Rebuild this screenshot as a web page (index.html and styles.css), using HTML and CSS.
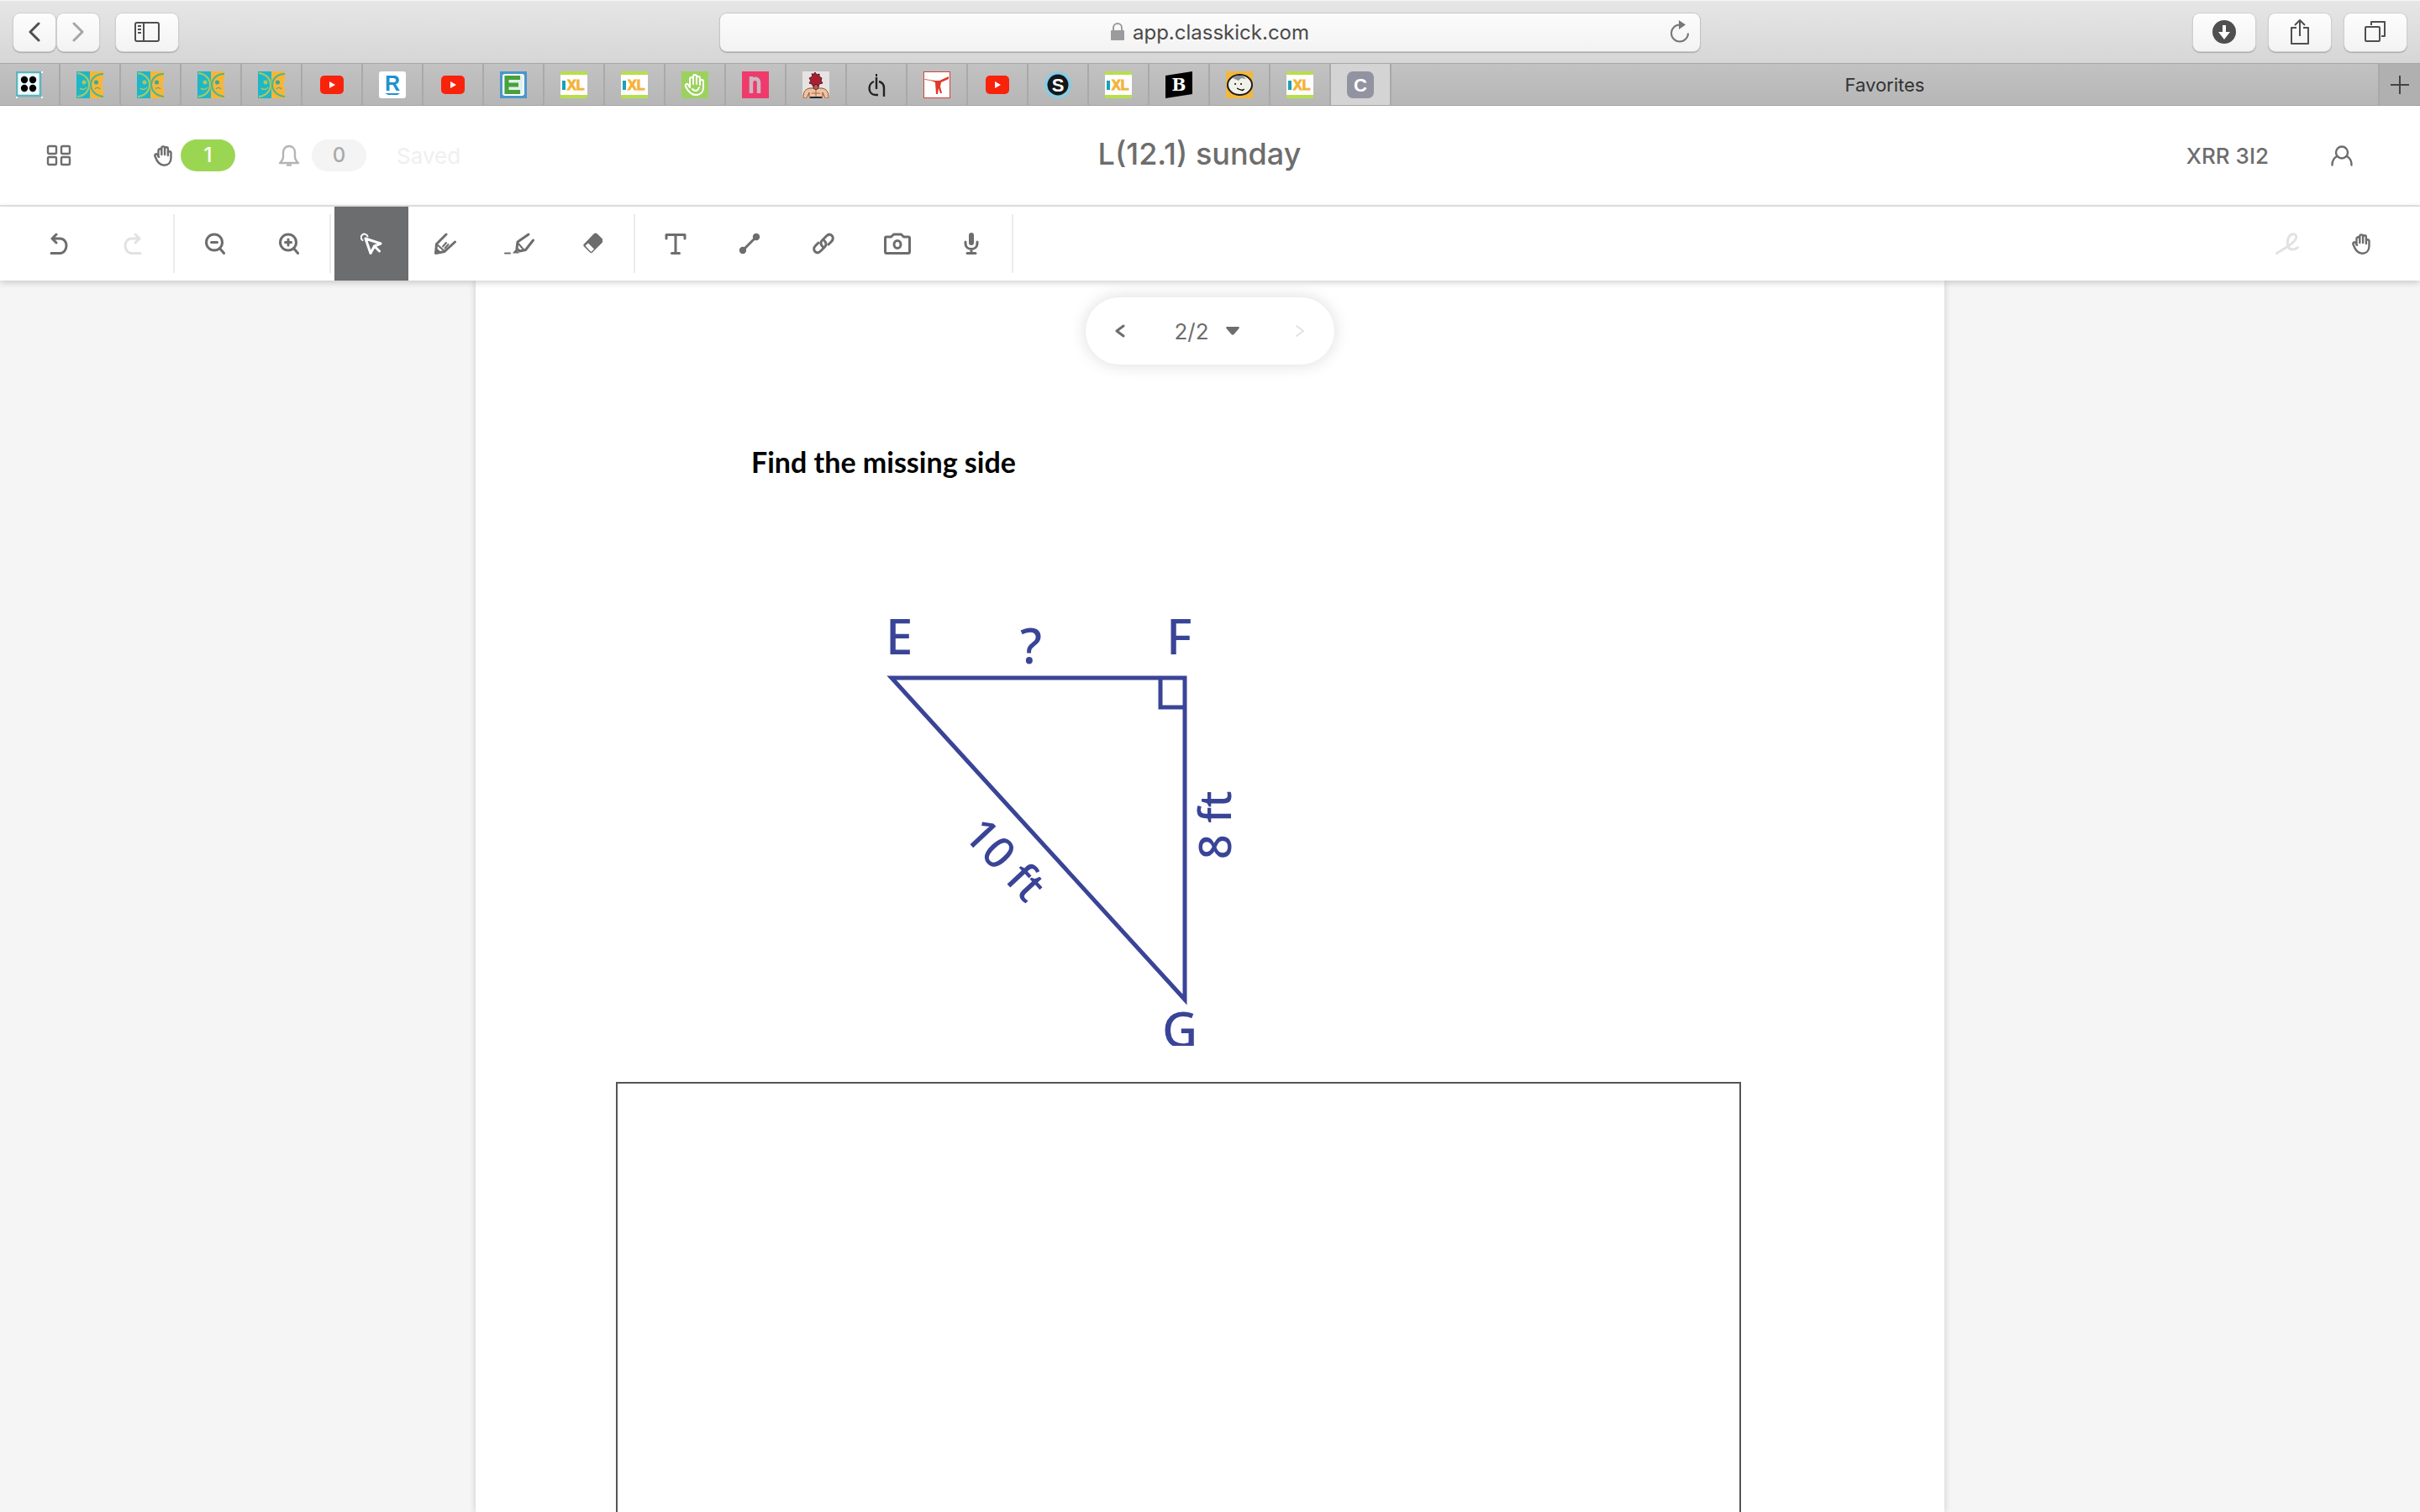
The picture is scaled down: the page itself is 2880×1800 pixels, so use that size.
FILE: index.html
```html
<!DOCTYPE html>
<html lang="en">
<head>
    <meta charset="UTF-8">
    <meta name="viewport" content="width=device-width, initial-scale=1.0">
    <title>L(12.1) sunday</title>
    <link rel="stylesheet" href="styles.css">
</head>
<body>
    <!-- Shared icons -->
    <svg class="sprite" aria-hidden="true">
        <symbol id="fav-faces" viewBox="0 0 32 32">
            <rect width="16" height="32" fill="#1fb6c6"/>
            <rect x="16" width="16" height="32" fill="#f6b638"/>
            <path d="M1 2C10 3 15 9 15 16S10 29 1 30" fill="none" stroke="#a9c766" stroke-width="2.200"/>
            <path d="M32 3c-9 0-15 6-15 13s6 13 15 14" fill="none" stroke="#4db68e" stroke-width="2.200"/>
            <circle cx="9" cy="13" r="2.500" fill="#a9c766"/>
            <circle cx="23.500" cy="13" r="2.500" fill="#3aa79a"/>
            <path d="M4 20c2 2 6 2 8-1" fill="none" stroke="#c6cc55" stroke-width="1.200"/>
            <path d="M22 21c1-2 5-2 6 0" fill="none" stroke="#3aa79a" stroke-width="1.200"/>
            <path d="M32 10l-2 7 2 3z" fill="#bdbdbd"/>
        </symbol>
        <symbol id="fav-youtube" viewBox="0 0 32 32">
            <rect x="2" y="5" width="28" height="22" rx="5" fill="#f9230b"/>
            <path d="M13 12v8l7-4z" fill="#fff"/>
        </symbol>
        <symbol id="hand" viewBox="0 0 22 25">
            <path d="M5.500 13.500V6.200a1.900 1.900 0 0 1 3.800 0V11M9.300 11V3.300a1.900 1.900 0 0 1 3.800 0V11M13.100 11V4.200a1.900 1.900 0 0 1 3.800 0V12M16.900 8.500a1.900 1.900 0 0 1 3.600 0V15c0 5.500-3.500 8.700-8.300 8.700C7 23.700 3.800 19.500 1.500 13c-.8-2.600 1.600-3.600 3-1.700l1.600 2.500" fill="none" stroke="currentColor" stroke-width="2.400" stroke-linecap="round" stroke-linejoin="round"/>
        </symbol>
    </svg>

    <!-- Browser toolbar -->
    <div class="browser-bar">
        <div class="browser-left">
            <div class="nav-buttons">
                <button class="chrome-btn nav" aria-label="Back">
                    <svg width="14" height="24" viewBox="0 0 14 24"><path d="M12 2 2 12l10 10" class="chrome-line thick"/></svg>
                </button>
                <button class="chrome-btn nav muted" aria-label="Forward">
                    <svg width="14" height="24" viewBox="0 0 14 24"><path d="m2 2 10 10L2 22" class="chrome-line thick"/></svg>
                </button>
            </div>
            <button class="chrome-btn wide" aria-label="Sidebar">
                <svg width="30" height="24" viewBox="0 0 30 24"><rect x="1" y="1" width="28" height="22" rx="2" class="chrome-line"/><path d="M11 1v22M4 5h4M4 9h4M4 13h4" class="chrome-line"/></svg>
            </button>
        </div>
        <div class="address">
            <svg width="16" height="22" viewBox="0 0 16 22"><rect y="9" width="16" height="12" rx="1" fill="#9c9c9c"/><path d="M3 10V6a5 5 0 0 1 10 0v4" fill="none" stroke="#9c9c9c" stroke-width="2"/></svg>
            <input type="text" value="app.classkick.com" aria-label="Address">
            <button class="reload" aria-label="Reload">
                <svg width="24" height="28" viewBox="0 0 24 28"><path d="M12 5.500A10 10 0 1 0 22 15.500" fill="none" stroke="#777" stroke-width="2"/><path d="M11 0v11l8-5.500z" fill="#777"/></svg>
            </button>
        </div>
        <div class="browser-right">
            <button class="chrome-btn wide" aria-label="Downloads">
                <svg width="28" height="28" viewBox="0 0 28 28"><circle cx="14" cy="14" r="14" fill="#4f4f4f"/><path d="M12 6h4v8h5l-7 9-7-9h5z" fill="#fff"/></svg>
            </button>
            <button class="chrome-btn wide" aria-label="Share">
                <svg width="22" height="32" viewBox="0 0 22 32"><path d="M7 11H1v19h20V11h-6M11 21V2M5 8l6-6 6 6" class="chrome-line"/></svg>
            </button>
            <button class="chrome-btn wide" aria-label="Show tabs">
                <svg width="26" height="26" viewBox="0 0 26 26"><rect x="1" y="7" width="17" height="17" rx="1" class="chrome-line"/><path d="M8 5V1h16v17h-4" class="chrome-line"/></svg>
            </button>
        </div>
    </div>

    <!-- Tabs -->
    <nav class="tabs">
        <a href="#" class="tab" aria-label="Dots"><svg class="favicon" viewBox="0 0 32 32"><rect x="1" y="1" width="28" height="28" fill="#eef8fa" stroke="#5db5bf" stroke-width="2.500"/><circle cx="10" cy="10" r="4.200"/><circle cx="20" cy="10" r="4.200"/><circle cx="10" cy="20" r="4.200"/><circle cx="20" cy="20" r="4.200"/><path d="M30 0h2v2h-2zM0 30h2v2H0zM30 30h2v2h-2z" fill="#fff"/></svg></a>
        <a href="#" class="tab" aria-label="Faces"><svg class="favicon"><use href="#fav-faces"/></svg></a>
        <a href="#" class="tab" aria-label="Faces"><svg class="favicon"><use href="#fav-faces"/></svg></a>
        <a href="#" class="tab" aria-label="Faces"><svg class="favicon"><use href="#fav-faces"/></svg></a>
        <a href="#" class="tab" aria-label="Faces"><svg class="favicon"><use href="#fav-faces"/></svg></a>
        <a href="#" class="tab" aria-label="Video"><svg class="favicon"><use href="#fav-youtube"/></svg></a>
        <a href="#" class="tab" aria-label="R"><svg class="favicon" viewBox="0 0 32 32"><rect width="32" height="32" rx="3" fill="#fff"/><text x="7" y="23" class="r-text">R</text><path d="M7 26h18l-3 2H11z" fill="#2191cf"/></svg></a>
        <a href="#" class="tab" aria-label="Video"><svg class="favicon"><use href="#fav-youtube"/></svg></a>
        <a href="#" class="tab" aria-label="E"><svg class="favicon" viewBox="0 0 32 32"><rect width="32" height="32" fill="#4a97cb"/><rect x="4" y="4" width="24" height="24" rx="2" fill="#dff0ea" stroke="#fff" stroke-width="2"/><path d="M24 7.500H8v17h16M8 16h14" fill="none" stroke="#49a13b" stroke-width="5"/></svg></a>
        <a href="#" class="tab" aria-label="IXL"><svg class="favicon" viewBox="0 0 32 32"><rect width="32" height="32" fill="#fff"/><path d="M0 0h32v4H0zM0 28h32v4H0z" fill="#b7de4b"/><rect x="2" y="11" width="4" height="11" fill="#1c9fb8"/><text x="8" y="22" class="ixl-text">XL</text></svg></a>
        <a href="#" class="tab" aria-label="IXL"><svg class="favicon" viewBox="0 0 32 32"><rect width="32" height="32" fill="#fff"/><path d="M0 0h32v4H0zM0 28h32v4H0z" fill="#b7de4b"/><rect x="2" y="11" width="4" height="11" fill="#1c9fb8"/><text x="8" y="22" class="ixl-text">XL</text></svg></a>
        <a href="#" class="tab" aria-label="Hand"><svg class="favicon" viewBox="0 0 32 32"><rect width="32" height="32" fill="#9bd25e"/><path d="M10 18V9a2 2 0 0 1 4 0v6-9a2 2 0 0 1 4 0v9-7a2 2 0 0 1 4 0v8-4a2 2 0 0 1 4 0v7c0 6-4 9-9 9-6 0-9-4-12-10-1-3 2-4 3-2l2 3M13 21c3 3 6 3 8-2" fill="none" stroke="#fff" stroke-width="2" stroke-linejoin="round" stroke-linecap="round"/></svg></a>
        <a href="#" class="tab" aria-label="n"><svg class="favicon" viewBox="0 0 32 32"><rect width="32" height="32" fill="#ef3a6c"/><path d="M11 26V6M11 13c0-5 9-6 9 0v13" fill="none" stroke="#c9b9bf" stroke-width="4.500"/></svg></a>
        <a href="#" class="tab" aria-label="Fighter"><svg class="favicon" viewBox="0 0 32 32"><rect width="32" height="32" fill="#e6e4e2"/><path d="M1 32c0-8 2-11 8-12h14c6 1 8 4 8 12h-4l-3-7v7H8v-7l-3 7z" fill="#efc3a0" stroke="#8d5038"/><path d="M13 13h6v7l-3 2-3-2z" fill="#b5614a" stroke="#5b2622"/><path d="M15 1l2 3 3-1 0 3 3 2-1 3 2 3-4 1-1 3-3-3-3 3-2-3-3-1 2-3-2-3 4-2-1-3 3 0z" fill="#a81f33" stroke="#641725"/><path d="M16 22v8M11 26h10" stroke="#a7664b"/><path d="M9 30h14v2H9z" fill="#222a33"/></svg></a>
        <a href="#" class="tab" aria-label="Power"><svg class="favicon" viewBox="0 0 32 32"><path d="M16 21V7M13 12c-8 3-7 16 2 16h3M19 12c4 1 6 4 6 8v10" fill="none" stroke="#222" stroke-width="2.400"/><path d="M15 3h2v3h-2z" fill="#222"/></svg></a>
        <a href="#" class="tab" aria-label="Figure"><svg class="favicon" viewBox="0 0 32 32"><rect x=".5" y=".5" width="31" height="31" fill="#fff" stroke="#c9453d"/><path d="M1 9l13 2 5 0 11-5v3l-9 4-1 5 2 8h-2l-2-6-1 7h-2l-1-14-5-2-7-1z" fill="#e0392b"/></svg></a>
        <a href="#" class="tab" aria-label="Video"><svg class="favicon"><use href="#fav-youtube"/></svg></a>
        <a href="#" class="tab" aria-label="S"><svg class="favicon" viewBox="0 0 32 32"><circle cx="16" cy="16" r="16" fill="#86cde6"/><circle cx="16" cy="16" r="12.500" fill="#14171a"/><text x="16" y="24" text-anchor="middle" class="s-text">S</text></svg></a>
        <a href="#" class="tab" aria-label="IXL"><svg class="favicon" viewBox="0 0 32 32"><rect width="32" height="32" fill="#fff"/><path d="M0 0h32v4H0zM0 28h32v4H0z" fill="#b7de4b"/><rect x="2" y="11" width="4" height="11" fill="#1c9fb8"/><text x="8" y="22" class="ixl-text">XL</text></svg></a>
        <a href="#" class="tab" aria-label="B"><svg class="favicon" viewBox="0 0 32 32"><path d="M0 5 32 0v27L0 32z"/><text x="16" y="23" text-anchor="middle" class="b-text">B</text></svg></a>
        <a href="#" class="tab" aria-label="Cartoon"><svg class="favicon" viewBox="0 0 32 32"><rect width="32" height="32" fill="#f2b73d"/><ellipse cx="16.500" cy="16" rx="14.500" ry="12" fill="#f1f1ea" stroke="#1c1c1c" stroke-width="2"/><path d="M8 8c5-4 12-4 16 1l-6-1-3 3z" fill="#899398"/><path d="M13 20c3 2 6 3 9 1l-2 2z" fill="#111" stroke="#111"/><circle cx="11" cy="15" r="1"/><circle cx="18" cy="15" r="1"/></svg></a>
        <a href="#" class="tab" aria-label="IXL"><svg class="favicon" viewBox="0 0 32 32"><rect width="32" height="32" fill="#fff"/><path d="M0 0h32v4H0zM0 28h32v4H0z" fill="#b7de4b"/><rect x="2" y="11" width="4" height="11" fill="#1c9fb8"/><text x="8" y="22" class="ixl-text">XL</text></svg></a>
        <a href="#" class="tab current" aria-label="Classkick"><svg class="favicon" viewBox="0 0 32 32"><rect width="32" height="32" rx="7" fill="#9293a0"/><text x="16" y="24" text-anchor="middle" class="c-text">C</text></svg></a>
        <a href="#" class="tab favorites">Favorites</a>
        <button class="new-tab" aria-label="New tab">
            <svg width="22" height="22" viewBox="0 0 22 22"><path d="M11 0v22M0 11h22" stroke="#444" stroke-width="2"/></svg>
        </button>
    </nav>

    <!-- App header -->
    <header class="app-header">
        <div class="header-left">
            <button class="icon-btn" aria-label="Dashboard">
                <svg width="30" height="26" viewBox="0 0 30 26" fill="none" stroke="currentColor" stroke-width="2.400"><rect x="2" y="2" width="10" height="9" rx="1.500"/><rect x="18" y="2" width="10" height="9" rx="1.500"/><rect x="2" y="15" width="10" height="9" rx="1.500"/><rect x="18" y="15" width="10" height="9" rx="1.500"/></svg>
            </button>
            <button class="icon-btn counter hands">
                <svg width="22" height="25"><use href="#hand"/></svg>
                <span class="pill green">1</span>
            </button>
            <button class="icon-btn counter bell">
                <svg width="26" height="26" viewBox="0 0 26 26" fill="none" stroke="currentColor" stroke-width="2.400" stroke-linejoin="round" stroke-linecap="round"><path d="M2 22c2-2 4-4 4-7V9.500C6 5 9 2 13 2s7 3 7 7.500V15c0 3 2 5 4 7z"/><path d="M11 24.500h4"/></svg>
                <span class="pill">0</span>
            </button>
            <span class="saved">Saved</span>
        </div>
        <h1>L(12.1) sunday</h1>
        <div class="header-right">
            <span class="room-code">XRR 3I2</span>
            <button class="icon-btn" aria-label="Account">
                <svg width="26" height="25" viewBox="0 0 26 25" fill="none" stroke="currentColor" stroke-width="2.400" stroke-linecap="round"><circle cx="13" cy="8.500" r="7"/><path d="M1.500 23.500c0-5 2.500-9 6-10.500M24.500 23.500c0-5-2.500-9-6-10.500"/></svg>
            </button>
        </div>
    </header>

    <!-- Drawing tools -->
    <div class="toolbar">
        <button class="tool" aria-label="Undo"><svg width="22" height="26" viewBox="0 0 22 26"><path d="M3 7h9.500c4.500 0 7.500 4 7.500 8.500s-3 9-7.500 9H2M8 2 3 7l5 5" class="line"/></svg></button>
        <button class="tool disabled" aria-label="Redo"><svg width="22" height="26" viewBox="0 0 22 26"><path d="M19 7H9.500C5 7 2 11 2 15.500s3 9 7.500 9H20M14 2l5 5-5 5" class="line"/></svg></button>
        <span class="divider"></span>
        <button class="tool" aria-label="Zoom out"><svg width="24" height="26" viewBox="0 0 24 26"><circle cx="11" cy="11.500" r="9.500" class="line"/><path d="M7.500 11.500h7M17.500 18.500l5 6" class="line"/></svg></button>
        <button class="tool" aria-label="Zoom in"><svg width="24" height="26" viewBox="0 0 24 26"><circle cx="11" cy="11.500" r="9.500" class="line"/><path d="M7.500 11.500h7M11 8v7M17.500 18.500l5 6" class="line"/></svg></button>
        <span class="divider"></span>
        <button class="tool active" aria-label="Select"><svg width="26" height="26" viewBox="0 0 26 26"><path d="M2.500 9A4 4 0 1 1 8.500 4.500" class="line slim"/><path d="M6 7 24 13l-7.500 3L12 24.500zM16.500 16l6 6" class="line"/></svg></button>
        <button class="tool" aria-label="Pen"><svg width="26" height="26" viewBox="0 0 26 26"><path d="M14 2 2.500 13.500 1.500 24.500l10.500-2L24.500 11" class="line"/><path d="m3 14 9 8M10 16.500l4-4.500M12.500 18.500l4-4.500" class="line slim"/><path d="m2 18 6 5-6.500 2z" fill="currentColor"/></svg></button>
        <button class="tool" aria-label="Highlighter"><svg width="36" height="26" viewBox="0 0 36 26"><path d="M29 2 16 11l-1 8 3.500 3 7-1.500L34.500 9" class="line"/><path d="M1 24.500h6M16 12l7 8" class="line slim"/><path d="m14 19.500 4 5h-8z" fill="currentColor"/></svg></button>
        <button class="tool" aria-label="Eraser"><svg width="26" height="26" viewBox="0 0 26 26"><path d="M13.500 1.500 2 13.500c-1 1-1 2 0 3l7 7c1 1 2 1 3 0l12-12V7.500L18 1.500c-1.500-1.500-3-1.500-4.500 0z" fill="currentColor"/><path d="m7 12.500 7 7-3.500 3.500-7-7.500z" fill="#fff"/></svg></button>
        <span class="divider"></span>
        <button class="tool" aria-label="Text"><svg width="26" height="26" viewBox="0 0 26 26"><path d="M2 7V2.500h22V7M13 3v21M8.500 24.500h9" class="line"/></svg></button>
        <button class="tool" aria-label="Line"><svg width="26" height="26" viewBox="0 0 26 26"><path d="M5 21 21 5" class="line"/><circle cx="5" cy="21" r="4.200" fill="currentColor"/><circle cx="21" cy="5" r="4.200" fill="currentColor"/></svg></button>
        <button class="tool" aria-label="Link"><svg width="26" height="26" viewBox="0 0 26 26"><path d="M12 16.500c-3-3-2.500-5.500-.5-7.500l5-5c2-2 4.500-2.500 6.500-.5s1.500 5-.5 7l-3.500 3.500" class="line"/><path d="M14 9.500c3 3 2.500 5.500.5 7.500l-5 5c-2 2-4.500 2.500-6.500.5s-1.500-5 .5-7L7 12" class="line"/></svg></button>
        <button class="tool" aria-label="Camera"><svg width="32" height="26" viewBox="0 0 32 26"><path d="M3 5h5.500L11.500 2h9l3 3H29c1 0 1.500.5 1.500 1.500v16c0 1-.5 2-1.500 2H3c-1 0-1.500-1-1.500-2v-16C1.500 5.500 2 5 3 5z" class="line"/><ellipse cx="16" cy="14" rx="4" ry="4.500" class="line"/></svg></button>
        <button class="tool" aria-label="Record"><svg width="18" height="26" viewBox="0 0 18 26"><rect x="6" y="0" width="6" height="15" rx="3" fill="currentColor"/><path d="M2 11v2c0 4 3 6.500 7 6.500s7-2.500 7-6.500v-2M9 20v4M4 24.500h10" class="line"/></svg></button>
        <span class="divider"></span>
        <div class="toolbar-right">
            <button class="tool disabled" aria-label="Scribble"><svg width="28" height="26" viewBox="0 0 28 26"><path d="M1.500 24.500C8 20 22 14 24.500 6.500 26 1 19 0 16 5c-3 6-2 15 4 15 3 0 5-1 6.500-2.500" class="line"/></svg></button>
            <button class="tool" aria-label="Raise hand"><svg width="22" height="25"><use href="#hand"/></svg></button>
        </div>
    </div>

    <!-- Canvas -->
    <main class="canvas">
        <div class="pager">
            <button class="icon-btn" aria-label="Previous page"><svg width="12" height="16" viewBox="0 0 12 16"><path d="m10 2-8 6 8 6" class="line"/></svg></button>
            <button class="icon-btn page-number">2/2 <svg width="16" height="10" viewBox="0 0 16 10"><path d="M1 0h14c1 0 1 1 .5 2L9.500 9c-1 1-2 1-3 0l-6-7C0 1 0 0 1 0z" fill="currentColor"/></svg></button>
            <button class="icon-btn disabled" aria-label="Next page"><svg width="12" height="16" viewBox="0 0 12 16"><path d="m2 2 8 6-8 6" class="line slim"/></svg></button>
        </div>
        <article class="sheet">
            <h2>Find the missing side</h2>
            <svg class="triangle" width="440" height="545" viewBox="0 -20 440 545">
                <path d="M21 87H370V470Z"/>
                <path d="M341 87V122H370"/>
                <text x="14" y="59">E</text>
                <text x="174" y="70">?</text>
                <text x="348" y="59">F</text>
                <text x="343" y="527">G</text>
                <text class="side" transform="translate(105 275) rotate(47)">10 ft</text>
                <text class="side" transform="translate(425 303) rotate(-90)">8 ft</text>
            </svg>
            <div class="work-area"></div>
        </article>
    </main>
</body>
</html>
```
FILE: styles.css
```css
:root {
    --ink: #6d6d6d;
    --line: #e6e6e6;
    --green: #9bd653;
    --figure: #3a4497;
}

* {
    box-sizing: border-box;
}

body {
    margin: 0;
    min-height: 100vh;
    display: flex;
    flex-direction: column;
    font-family: Inter, "Liberation Sans", sans-serif;
    font-size: 24px;
    color: var(--ink);
    background-color: #f5f5f5;
}

button {
    font: inherit;
    color: inherit;
    border: none;
    background: none;
    padding: 0;
    cursor: pointer;
}

svg {
    display: block;
    flex: none;
}

.sprite {
    position: absolute;
    width: 0;
    height: 0;
}

/* Browser toolbar */
.browser-bar {
    height: 75px;
    padding: 0 16px;
    display: grid;
    grid-template-columns: 1fr 1166px 1fr;
    align-items: center;
    background: linear-gradient(#e6e6e6, #d6d6d6);
    border-top: 1px solid #f6f6f6;
}

.browser-left,
.browser-right {
    display: flex;
    gap: 20px;
}

.browser-right {
    justify-content: flex-end;
    gap: 16px;
}

.nav-buttons {
    display: flex;
    gap: 2px;
}

.chrome-btn {
    height: 45px;
    display: flex;
    align-items: center;
    justify-content: center;
    color: #4f4f4f;
    background: linear-gradient(#fdfdfd, #f3f3f3);
    border-radius: 8px;
    box-shadow: 0 0 0 1px #cfcfcf, 0 1px 1px 1px #a9a9a9;
}

.nav {
    width: 50px;
}

.wide {
    width: 74px;
}

.muted {
    color: #a6a6a6;
}

.chrome-line {
    fill: none;
    stroke: currentColor;
    stroke-width: 2;
    stroke-linejoin: round;
}

.thick {
    stroke-width: 3;
    stroke-linecap: round;
}

.address {
    position: relative;
    height: 45px;
    display: flex;
    align-items: center;
    justify-content: center;
    gap: 10px;
    background: linear-gradient(#fcfcfc, #f3f3f3);
    border-radius: 8px;
    box-shadow: 0 0 0 1px #c6c6c6, 0 1px 1px 1px #a9a9a9;
}

.address input {
    width: 210px;
    padding: 0;
    border: none;
    outline: none;
    background: none;
    font: inherit;
    color: #4a4a4a;
}

.reload {
    position: absolute;
    right: 12px;
    top: 8px;
}

/* Tabs */
.tabs {
    display: flex;
    height: 51px;
    background: linear-gradient(#c2c2c2, #b6b6b6);
    border-top: 1px solid #a8a8a8;
    border-bottom: 1px solid #a2a2a2;
}

.tab {
    width: 72px;
    display: flex;
    align-items: center;
    justify-content: center;
    border-right: 2px solid #a9a9a9;
    color: #333;
    text-decoration: none;
}

.current {
    background-color: #d4d4d4;
}

.favorites {
    flex: 1;
    font-size: 22px;
}

.favicon {
    width: 32px;
    height: 32px;
}

.new-tab {
    width: 48px;
    display: flex;
    align-items: center;
    justify-content: center;
    background-color: #b0b0b0;
}

.ixl-text,
.r-text,
.s-text,
.c-text {
    font-family: "Liberation Sans", sans-serif;
    font-weight: bold;
}

.ixl-text {
    font-size: 16px;
    fill: #f5b335;
    stroke: #f5b335;
}

.r-text {
    font-size: 25px;
    fill: #2191cf;
}

.s-text {
    font-size: 22px;
    fill: #fff;
}

.c-text {
    font-size: 22px;
    fill: #fff;
}

.b-text {
    font: bold 20px "DejaVu Serif", serif;
    fill: #fff;
}

/* App header */
.app-header {
    height: 120px;
    padding: 0 80px 0 55px;
    display: grid;
    grid-template-columns: 1fr auto 1fr;
    align-items: center;
    background-color: #fff;
    border-bottom: 2px solid var(--line);
}

.header-left,
.header-right {
    display: flex;
    align-items: center;
}

.header-right {
    justify-content: flex-end;
    gap: 74px;
    font-size: 26px;
    font-weight: 500;
}

.icon-btn {
    display: flex;
    align-items: center;
}

.hands {
    gap: 10px;
    margin-left: 98px;
}

.bell {
    gap: 14px;
    margin-left: 51px;
    color: #b4b4b4;
}

.pill {
    width: 65px;
    line-height: 38px;
    border-radius: 19px;
    text-align: center;
    font-weight: 500;
    color: #a9a9a9;
    background-color: #f4f4f4;
}

.green {
    color: #fff;
    background-color: var(--green);
}

.saved {
    margin-left: 36px;
    font-size: 26px;
    color: #efefef;
}

h1 {
    margin: 0;
    padding-bottom: 4px;
    font-size: 36px;
    font-weight: 500;
}

/* Drawing tools */
.toolbar {
    position: relative;
    z-index: 1;
    display: flex;
    align-items: center;
    height: 88px;
    padding: 0 26px;
    background-color: #fff;
    box-shadow: 0 2px 8px rgba(0, 0, 0, 0.2);
}

.tool {
    width: 88px;
    height: 88px;
    display: flex;
    align-items: center;
    justify-content: center;
}

.active {
    color: #fff;
    background-color: #6c6d6f;
}

.disabled {
    color: #e2e2e2;
}

.line {
    fill: none;
    stroke: currentColor;
    stroke-width: 3;
    stroke-linecap: round;
    stroke-linejoin: round;
}

.slim {
    stroke-width: 2;
}

.divider {
    width: 2px;
    height: 70px;
    margin: 0 4px;
    background-color: #ebebeb;
}

.toolbar-right {
    display: flex;
    margin-left: auto;
}

/* Canvas */
.canvas {
    position: relative;
    flex: 1;
    display: flex;
    justify-content: center;
}

.pager {
    position: absolute;
    top: 20px;
    width: 296px;
    height: 80px;
    padding: 0 35px;
    display: flex;
    align-items: center;
    justify-content: space-between;
    background-color: #fff;
    border-radius: 40px;
    box-shadow: 0 0 20px rgba(0, 0, 0, 0.14);
}

.page-number {
    gap: 20px;
    margin-right: 8px;
    font-size: 26px;
}

.sheet {
    width: 100%;
    max-width: 1748px;
    padding: 194px 242px 0 167px;
    display: flex;
    flex-direction: column;
    background-color: #fff;
    box-shadow: 0 0 8px rgba(0, 0, 0, 0.18);
}

h2 {
    margin: 0 0 128px 161px;
    font-family: Lato, sans-serif;
    font-size: 34px;
    line-height: 44px;
    font-weight: bold;
    color: #000;
}

.triangle {
    margin-left: 307px;
}

.triangle path {
    fill: none;
    stroke: var(--figure);
    stroke-width: 5;
}

.triangle text {
    font-family: "Noto Sans", sans-serif;
    font-size: 58px;
    font-weight: 500;
    fill: var(--figure);
}

.triangle .side {
    font-size: 52px;
}

.work-area {
    flex: 1;
    min-height: 300px;
    margin-top: 43px;
    border: 2px solid #555;
    border-bottom: none;
}
```
